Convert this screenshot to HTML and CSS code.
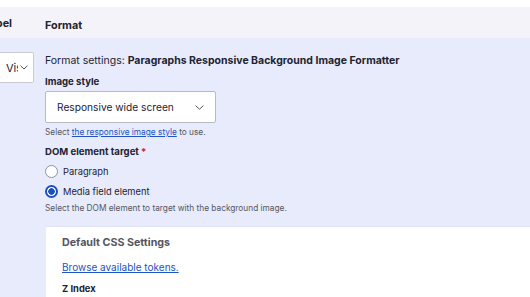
FILE: index.html
```
<!DOCTYPE html>
<html lang="en">
<head>
    <meta charset="UTF-8">
    <title>Manage display</title>
    <link rel="stylesheet" href="styles.css">
</head>
<body>
    <div class="field-table">
        <div class="table-head">
            <div class="col-label"><span class="th">Label</span></div>
            <div class="col-format"><span class="th">Format</span></div>
        </div>
        <div class="table-row">
            <div class="col-label">
                <div class="mini-select">
                    <span class="mini-value">Visually hidden</span>
                    <svg class="chevron" width="8" height="5" viewBox="0 0 8 5"><path d="M0.5 0.7l3.5 3.3 3.5-3.3" fill="none" stroke="#545560" stroke-width="1"/></svg>
                </div>
            </div>
            <div class="col-format">
                <div class="settings-title">Format settings: <strong>Paragraphs Responsive Background Image Formatter</strong></div>

                <div class="form-item">
                    <label class="form-label">Image style</label>
                    <div class="select">
                        <span>Responsive wide screen</span>
                        <svg class="chevron" width="9" height="5" viewBox="0 0 9 5"><path d="M0.5 0.6l4 3.6 4-3.6" fill="none" stroke="#545560" stroke-width="1"/></svg>
                    </div>
                    <div class="description">Select <a href="#">the responsive image style</a> to use.</div>
                </div>

                <div class="form-item">
                    <label class="form-label">DOM element target<span class="required">*</span></label>
                    <div class="radios">
                        <div class="radio">
                            <span class="radio-circle"></span>
                            <span>Paragraph</span>
                        </div>
                        <div class="radio">
                            <span class="radio-circle checked"></span>
                            <span>Media field element</span>
                        </div>
                    </div>
                    <div class="description tight">Select the DOM element to target with the background image.</div>
                </div>

                <div class="details">
                    <div class="details-title">Default CSS Settings</div>
                    <a class="token-link" href="#">Browse available tokens.</a>
                    <label class="form-label z-label">Z Index</label>
                </div>
            </div>
        </div>
    </div>
</body>
</html>
```

FILE: styles.css
```
body {
    margin: 0;
    background: #fff;
    font-family: Inter, "Noto Sans", sans-serif;
    color: #222330;
}
.field-table {
    padding-top: 7px;
}
.table-head {
    display: flex;
    height: 31px;
    box-sizing: border-box;
    padding-top: 1px;
    align-items: center;
    background: #f4f3f9;
}
.col-label {
    width: 45px;
    flex: none;
    display: flex;
    justify-content: flex-end;
    overflow: hidden;
}
.col-format {
    flex: 1;
    min-width: 0;
}
.th {
    font-size: 10.8px;
    font-weight: 700;
    white-space: nowrap;
}
.table-head .col-label .th {
    padding-right: 33px;
}
.table-row {
    display: flex;
    background: #e8ebfc;
}
.table-row .col-label {
    padding-top: 14px;
    align-items: flex-start;
}
.mini-select {
    display: flex;
    align-items: center;
    height: 31px;
    width: 40px;
    margin-right: 11px;
    background: #fff;
    border: 1px solid #c9cbd3;
    border-left: none;
    border-radius: 0 2px 2px 0;
    box-sizing: border-box;
    padding-left: 6px;
    font-size: 11px;
}
.mini-value {
    width: 12px;
    overflow: hidden;
    white-space: nowrap;
}
.mini-select .chevron {
    margin-left: 2px;
}
.table-row .col-format {
    padding-top: 16px;
}
.settings-title {
    font-size: 10.5px;
    white-space: nowrap;
    line-height: 14px;
}
.form-item {
    margin-top: 7px;
}
.form-label {
    display: block;
    font-size: 9.6px;
    font-weight: 700;
    line-height: 14px;
    white-space: nowrap;
}
.required {
    color: #dc2323;
    margin-left: 2px;
}
.select {
    display: flex;
    align-items: center;
    justify-content: space-between;
    width: 171px;
    height: 32px;
    margin-top: 2px;
    padding: 0 11px 0 11px;
    box-sizing: border-box;
    background: #fff;
    border: 1px solid #b9bbc3;
    border-radius: 2px;
    font-size: 10.2px;
    white-space: nowrap;
}
.description {
    margin-top: 3px;
    font-size: 8.3px;
    line-height: 12px;
    color: #55575f;
    white-space: nowrap;
}
.description.tight {
    margin-top: 1px;
}
.description a,
.token-link {
    color: #2253c4;
}
.radios {
    padding-top: 2px;
}
.radio {
    display: flex;
    align-items: center;
    gap: 5px;
    height: 20px;
    font-size: 9.3px;
}
.radio-circle {
    width: 13px;
    height: 13px;
    box-sizing: border-box;
    border: 1px solid #8e929c;
    border-radius: 50%;
    background: #fff;
}
.radio-circle.checked {
    border: 2px solid #1b4fc0;
    background: radial-gradient(circle, #1b4fc0 0 3px, #fff 3.5px);
}
.details {
    margin-top: 12px;
    margin-left: 1px;
    padding: 9px 16px 0;
    height: 80px;
    background: #fff;
    border-top: 1px solid #dfe3f5;
}
.details-title {
    font-size: 10.7px;
    font-weight: 700;
    color: #545560;
    line-height: 14px;
}
.token-link {
    display: inline-block;
    margin-top: 10px;
    font-size: 10px;
    line-height: 14px;
}
.z-label {
    margin-top: 7px;
    font-size: 9.4px;
}
```
